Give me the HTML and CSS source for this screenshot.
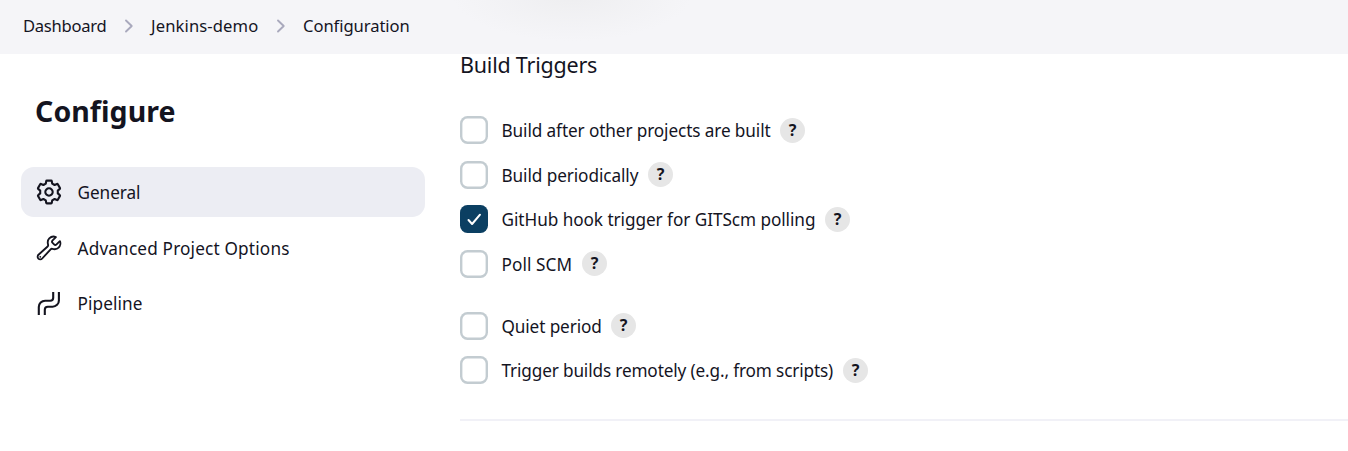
FILE: index.html
```html
<!DOCTYPE html>
<html lang="en">
<head>
<meta charset="utf-8">
<title>Jenkins-demo Config</title>
<link rel="stylesheet" href="styles.css">
</head>
<body>
<nav class="breadcrumbs">
  <span class="crumb crumb-dash">Dashboard</span>
  <svg class="chevron" viewBox="0 0 10 16"><path d="M2 2.5l5.7 5.5L2 13.5"/></svg>
  <span class="crumb crumb-job">Jenkins-demo</span>
  <svg class="chevron" viewBox="0 0 10 16"><path d="M2 2.5l5.7 5.5L2 13.5"/></svg>
  <span class="crumb crumb-config">Configuration</span>
</nav>
<div class="page">
  <aside class="side">
    <h1 class="title">Configure</h1>
    <div class="task task-active">
      <svg class="icon" viewBox="-14 -14 28 28"><path d="M-2.2-11.4H2.2Q2.7-11.4 2.8-10.9L3.2-8.4 5.6-7 8-8Q8.5-8.2 8.8-7.7L11-3.9Q11.2-3.4 10.8-3.1L8.8-1.4V1.4L10.8 3.1Q11.2 3.4 11 3.9L8.8 7.7Q8.5 8.2 8 8L5.6 7 3.2 8.4 2.8 10.9Q2.7 11.4 2.2 11.4H-2.2Q-2.7 11.4-2.8 10.9L-3.2 8.4-5.6 7-8 8Q-8.5 8.2-8.8 7.7L-11 3.9Q-11.2 3.4-10.8 3.1L-8.8 1.4V-1.4L-10.8-3.1Q-11.2-3.4-11-3.9L-8.8-7.7Q-8.5-8.2-8-8L-5.6-7-3.2-8.4-2.8-10.9Q-2.7-11.4-2.2-11.4Z"/><circle r="3.7"/></svg>
      <span class="task-text text-general">General</span>
    </div>
    <div class="task">
      <svg class="icon icon-wrench" viewBox="0 0 512 512"><path d="M393.87 190a32.1 32.1 0 01-45.25 0l-26.57-26.57a32.09 32.09 0 010-45.26L382.19 58a1 1 0 00-.3-1.64c-38.82-16.64-89.15-8.16-121.11 23.57-30.58 30.35-32.32 76-21.12 115.84a31.93 31.93 0 01-9.06 32.08L64 380a48.17 48.17 0 1068 68l153.86-167a31.93 31.93 0 0131.6-9.13c39.54 10.59 84.54 8.6 114.72-21.19 32.49-32 39.5-88.56 23.75-120.93a1 1 0 00-1.6-.26z"/><circle class="dot" cx="96" cy="416" r="16"/></svg>
      <span class="task-text text-advanced">Advanced Project Options</span>
    </div>
    <div class="task">
      <svg class="icon" viewBox="35 289 28 28"><path d="M38.8 315V307A6.3 6.3 0 0145.1 300.7H50.2A3 3 0 0053.2 297.7V292M44.8 315V309.7A3 3 0 0147.8 306.7H52.6A6.3 6.3 0 0058.9 300.4V292"/></svg>
      <span class="task-text text-pipeline">Pipeline</span>
    </div>
  </aside>
  <main class="main">
    <h2 class="heading">Build Triggers</h2>
    <div class="option"><span class="box"></span><span class="label l1">Build after other projects are built</span><span class="help">?</span></div>
    <div class="option"><span class="box"></span><span class="label l2">Build periodically</span><span class="help">?</span></div>
    <div class="option"><span class="box box-checked"><svg class="tick" viewBox="0 0 28 28"><path d="M8.5 15l3.6 4L20 9.7"/></svg></span><span class="label l3">GitHub hook trigger for GITScm polling</span><span class="help">?</span></div>
    <div class="option option-last"><span class="box"></span><span class="label l4">Poll SCM</span><span class="help">?</span></div>
    <div class="option"><span class="box"></span><span class="label l5">Quiet period</span><span class="help">?</span></div>
    <div class="option"><span class="box"></span><span class="label l6">Trigger builds remotely (e.g., from scripts)</span><span class="help">?</span></div>
    <div class="divider"></div>
  </main>
</div>
</body>
</html>
```
FILE: styles.css
```css
* { box-sizing: border-box; }
body {
  margin: 0;
  height: 451px;
  overflow: hidden;
  background: #fff;
  color: #14141f;
  font: 400 17.2px/24px "Noto Sans", sans-serif;
  white-space: nowrap;
}
.breadcrumbs {
  display: flex;
  align-items: center;
  height: 54px;
  padding: 0 0 2px 23px;
  background: radial-gradient(ellipse 120px 46px at 572px -5px, #eeeef0, #f5f5f8) #f5f5f8;
  font-size: 16.6px;
}
.crumb { flex: none; }
.crumb-dash { width: 83px; letter-spacing: -.29px; }
.crumb-job { width: 107px; letter-spacing: .12px; }
.crumb-config { letter-spacing: -.07px; }
.chevron {
  flex: none;
  width: 10px;
  height: 16px;
  margin: 0 17px 0 18px;
  fill: none;
  stroke: #a9a9bd;
  stroke-width: 1.9;
  stroke-linecap: round;
  stroke-linejoin: round;
}
.page { display: flex; }
.side { width: 404px; margin-left: 21px; flex: none; }
.title {
  margin: 37px 0 35px 14px;
  font-size: 28.5px;
  line-height: 41px;
  font-weight: 700;
  letter-spacing: .08px;
}
.task {
  display: flex;
  align-items: center;
  gap: 14.5px;
  height: 50px;
  margin-bottom: 5.5px;
  padding-left: 14px;
  border-radius: 13px;
}
.task-active { background: #ecedf3; }
.task-text { padding-top: 2px; }
.text-general { letter-spacing: -.05px; }
.text-advanced { letter-spacing: .17px; }
.text-pipeline { letter-spacing: .1px; }
.icon {
  width: 28px;
  height: 28px;
  flex: none;
  fill: none;
  stroke: #14141f;
  stroke-width: 2.1;
  stroke-linejoin: round;
}
.icon-wrench { stroke-width: 34; }
.dot { fill: #14141f; stroke: none; }
.main { flex: 1; margin-left: 35px; }
.heading {
  margin: -1px 0 0;
  font-size: 21.5px;
  line-height: 24px;
  font-weight: 400;
  letter-spacing: -.22px;
}
.option {
  display: flex;
  align-items: center;
  height: 28px;
  margin-top: 16.5px;
}
.heading + .option { margin-top: 39px; }
.option-last { margin-bottom: 34.2px; }
.box {
  width: 28px;
  height: 28px;
  flex: none;
  box-shadow: inset 0 0 0 2.4px #c3ccd1;
  border-radius: 7.5px;
  margin-right: 13.5px;
}
.box-checked { box-shadow: none; background: #0b3f62; }
.tick {
  display: block;
  fill: none;
  stroke: #fff;
  stroke-width: 2;
  stroke-linecap: round;
  stroke-linejoin: round;
}
.label { flex: none; padding-top: 2px; }
.l1 { width: 269px; letter-spacing: -.11px; }
.l2 { width: 137px; letter-spacing: -.09px; }
.l3 { width: 314px; letter-spacing: -.06px; }
.l4 { width: 71px; letter-spacing: .07px; }
.l5 { width: 100px; letter-spacing: -.12px; }
.l6 { width: 332px; letter-spacing: -.145px; }
.help {
  width: 25px;
  height: 25px;
  margin-left: 9.5px;
  border-radius: 50%;
  background: #e6e6e6;
  text-align: center;
  font-size: 16px;
  line-height: 25px;
  font-weight: 700;
}
.divider { height: 2px; margin-top: 34.8px; background: #f1f1f7; }
```
